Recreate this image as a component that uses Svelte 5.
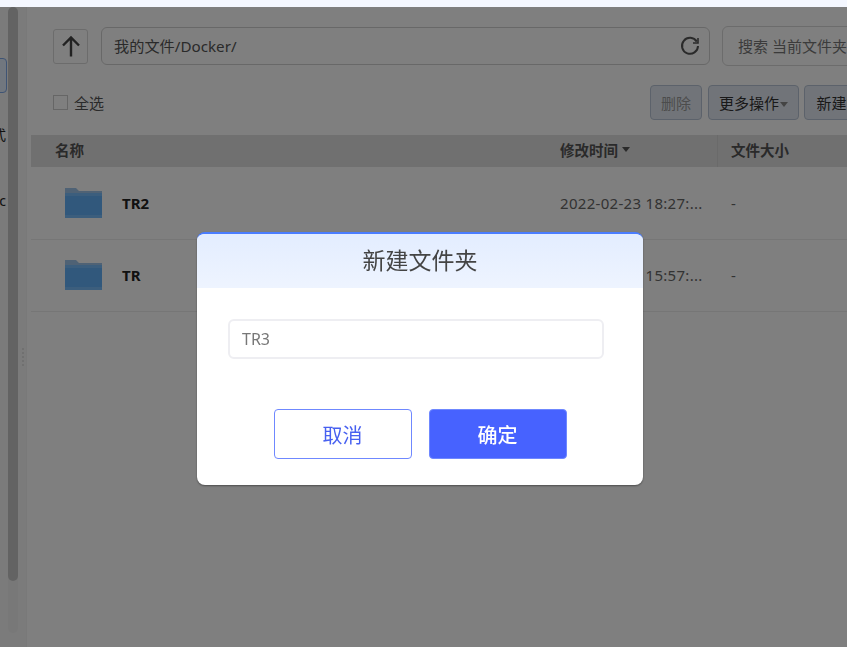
<script>
	const rows = [
		{ name: 'TR2', time: '2022-02-23 18:27:...', size: '-' },
		{ name: 'TR', time: '2022-02-23 15:57:...', size: '-' }
	];
</script>

<div class="page">
	<div class="strip"></div>
	<div class="main">
		<aside class="side">
			<div class="side-item active"></div>
			<div class="side-text first">模式</div>
			<div class="side-text second">Dic</div>
			<div class="grip"></div>
		</aside>
		<div class="scroll-track"><div class="scroll-thumb"></div></div>

		<section class="content">
			<div class="pathbar">
				<button class="up" aria-label="up">
					<svg width="20" height="22" viewBox="0 0 20 22" fill="none" stroke="#444" stroke-width="2.4">
						<path d="M10 21.5V2.5M2 10.5l8-8 8 8" />
					</svg>
				</button>
				<div class="path">
					<span>我的文件/Docker/</span>
					<svg width="20" height="20" viewBox="0 0 20 20" fill="none" stroke="#555" stroke-width="2">
						<path d="M16.8 5.6A8 8 0 1 0 18 10" />
						<path d="M18 2v5h-5" stroke-width="1.6" />
					</svg>
				</div>
				<div class="search">搜索 当前文件夹</div>
			</div>

			<div class="actions">
				<label class="all"><i></i>全选</label>
				<div class="btns">
					<button class="btn off">删除</button>
					<button class="btn more">更多操作<b></b></button>
					<button class="btn new">新建文件夹</button>
				</div>
			</div>

			<div class="table">
				<div class="thead">
					<div class="c-name">名称</div>
					<div class="c-time">修改时间<b></b></div>
					<div class="c-size">文件大小</div>
				</div>
				{#each rows as row}
					<div class="row">
						<div class="c-name">
							<svg class="folder" width="37" height="30" viewBox="0 0 37 30">
								<path d="M0 30V0h11l3 3h23v27z" fill="#9ec4ea" />
								<path d="M0 5h37v25H0z" fill="#78bcfa" />
								<path d="M0 8h37v19H0z" fill="#62b0f8" />
							</svg>
							<strong>{row.name}</strong>
						</div>
						<div class="c-time">{row.time}</div>
						<div class="c-size">{row.size}</div>
					</div>
				{/each}
			</div>
		</section>
	</div>
</div>

<div class="overlay">
	<div class="modal">
		<header>新建文件夹</header>
		<div class="body">
			<input value="TR3" />
		</div>
		<footer>
			<button class="cancel">取消</button>
			<button class="ok">确定</button>
		</footer>
	</div>
</div>

<style>
	:global(body) {
		background: #fff;
		overflow: hidden;
	}

	.page {
		height: 647px;
		width: 847px;
		overflow: hidden;
		display: flex;
		flex-direction: column;
		font-family: "Noto Sans", "Noto Sans CJK SC", sans-serif;
		color: #333;
		font-size: 15px;
	}

	.strip {
		height: 7px;
		background: #f4f7ff;
		flex: none;
	}

	.main {
		flex: 1;
		display: flex;
		position: relative;
	}

	.side {
		width: 27px;
		flex: none;
		background: #f6f6f6;
		position: relative;
		overflow: hidden;
		border-right: 1px solid #f2f2f2;
		box-sizing: border-box;
	}

	.side-item {
		position: absolute;
		top: 51px;
		left: -40px;
		width: 45px;
		height: 33px;
		border: 1px solid #7fa8e8;
		border-radius: 4px;
		background: #e3eeff;
	}

	.side-text {
		position: absolute;
		right: 20px;
		white-space: nowrap;
		font-size: 14px;
		color: #222;
	}

	.first {
		top: 117px;
	}

	.second {
		top: 184px;
		right: 19px;
		letter-spacing: 1px;
	}

	.grip {
		position: absolute;
		left: 22px;
		top: 341px;
		width: 2px;
		height: 20px;
		background: repeating-linear-gradient(#e0e0e0 0 2px, transparent 2px 4px);
	}

	.scroll-track {
		position: absolute;
		left: 8px;
		top: 0;
		width: 10px;
		height: 626px;
		border-radius: 5px;
		background: #f0f0f0;
	}

	.scroll-thumb {
		height: 574px;
		border-radius: 5px;
		background: #c6c6c6;
	}

	.content {
		flex: 1;
		min-width: 0;
		padding-left: 4px;
		overflow: hidden;
	}

	.pathbar {
		display: flex;
		align-items: center;
		height: 40px;
		margin-top: 19px;
		padding-left: 22px;
		width: 900px;
	}

	.up {
		width: 35px;
		height: 35px;
		flex: none;
		padding: 0;
		background: #fff;
		border: 1px solid #d8d8d8;
		border-radius: 3px;
		display: flex;
		align-items: center;
		justify-content: center;
		box-sizing: border-box;
	}

	.path {
		margin-left: 13px;
		width: 609px;
		height: 38px;
		flex: none;
		box-sizing: border-box;
		border: 1px solid #d0d0d0;
		border-radius: 6px;
		padding: 0 9px 0 12px;
		display: flex;
		align-items: center;
		justify-content: space-between;
		color: #555;
	}

	.path span {
		font-size: 15.2px;
		padding-bottom: 2px;
	}

	.search {
		margin-left: 12px;
		width: 300px;
		height: 40px;
		flex: none;
		box-sizing: border-box;
		border: 1px solid #d8d8d8;
		border-radius: 6px;
		padding-left: 15px;
		line-height: 38px;
		color: #777;
		white-space: nowrap;
	}

	.actions {
		display: flex;
		align-items: center;
		margin-top: 19px;
		height: 35px;
		padding-left: 22px;
		width: 900px;
		box-sizing: border-box;
	}

	.all {
		display: flex;
		align-items: center;
		gap: 6px;
		color: #555;
	}

	.all i {
		width: 13px;
		height: 13px;
		border: 1px solid #ccc;
		background: #fff;
	}

	.btns {
		display: flex;
		gap: 6px;
		margin-left: 546px;
		flex: none;
	}

	.btn {
		height: 35px;
		padding: 0;
		box-sizing: border-box;
		border: 1px solid #b9c5d6;
		border-radius: 4px;
		background: #e3e9f2;
		font: inherit;
		color: #333;
		white-space: nowrap;
		overflow: hidden;
		flex: none;
	}

	.off {
		width: 52px;
		color: #999;
	}

	.more {
		width: 91px;
	}

	.more b,
	.c-time b {
		display: inline-block;
		border: 4px solid transparent;
		border-top: 5px solid #888;
		border-bottom: 0;
		margin-left: 1px;
		vertical-align: middle;
	}

	.new {
		width: 100px;
		margin-left: -1px;
	}

	.table {
		margin-top: 15px;
		width: 816px;
	}

	.thead,
	.row {
		display: grid;
		grid-template-columns: 516px 170px 130px;
		align-items: center;
	}

	.thead {
		height: 32px;
		margin-bottom: 1px;
		background: #e0e0e0;
		font-weight: 700;
		font-size: 14.5px;
		color: #555;
	}

	.thead .c-name {
		padding: 0 0 3px 24px;
	}

	.thead .c-time {
		padding: 0 0 3px 13px;
		box-sizing: border-box;
		height: 100%;
		display: flex;
		align-items: center;
		gap: 3px;
	}

	.thead .c-time b {
		border-top-color: #555;
	}

	.thead .c-size {
		padding: 0 0 3px 13px;
		box-sizing: border-box;
		height: 100%;
		display: flex;
		align-items: center;
		border-left: 1px solid #d4d4d4;
	}

	.row {
		height: 72px;
		padding-bottom: 1px;
		border-bottom: 1px solid #ececec;
		box-sizing: border-box;
	}

	.row .c-name {
		display: flex;
		align-items: center;
		padding-left: 34px;
		gap: 20px;
	}

	.row strong {
		color: #222;
	}

	.row .c-time {
		padding-left: 13px;
		color: #666;
		white-space: nowrap;
		letter-spacing: 0.3px;
	}

	.row .c-size {
		padding-left: 14px;
		color: #666;
	}

	.overlay {
		position: fixed;
		inset: 7px 0 0;
		background: rgba(0, 0, 0, 0.5);
		font-family: "Noto Sans", "Noto Sans CJK SC", sans-serif;
	}

	.modal {
		position: absolute;
		left: 197px;
		top: 225px;
		width: 446px;
		height: 253px;
		background: #fff;
		border-radius: 8px;
		box-sizing: border-box;
		border-top: 2px solid #4a7dff;
		box-shadow: 0 1px 2px rgba(0, 0, 0, 0.4);
		overflow: hidden;
	}

	header {
		height: 54px;
		line-height: 52px;
		text-align: center;
		font-size: 23px;
		color: #444;
		background: linear-gradient(#e3edff, #eef4ff);
	}

	.body {
		padding: 31px 39px 0 31px;
	}

	input {
		display: block;
		width: 100%;
		height: 40px;
		box-sizing: border-box;
		border: 2px solid #eeeef2;
		border-radius: 6px;
		padding: 0 12px;
		font: inherit;
		font-size: 16px;
		color: #777;
		outline: none;
	}

	footer {
		display: flex;
		justify-content: center;
		gap: 17px;
		margin-top: 50px;
	}

	footer button {
		width: 138px;
		height: 50px;
		box-sizing: border-box;
		border-radius: 4px;
		font: inherit;
		font-size: 20px;
		padding: 0;
	}

	.cancel {
		background: #fff;
		color: #4760f0;
		border: 1px solid #6f88ff;
	}

	.ok {
		background: #4762ff;
		color: #fff;
		border: 1px solid #6f88ff;
		font-weight: 500;
	}
</style>
